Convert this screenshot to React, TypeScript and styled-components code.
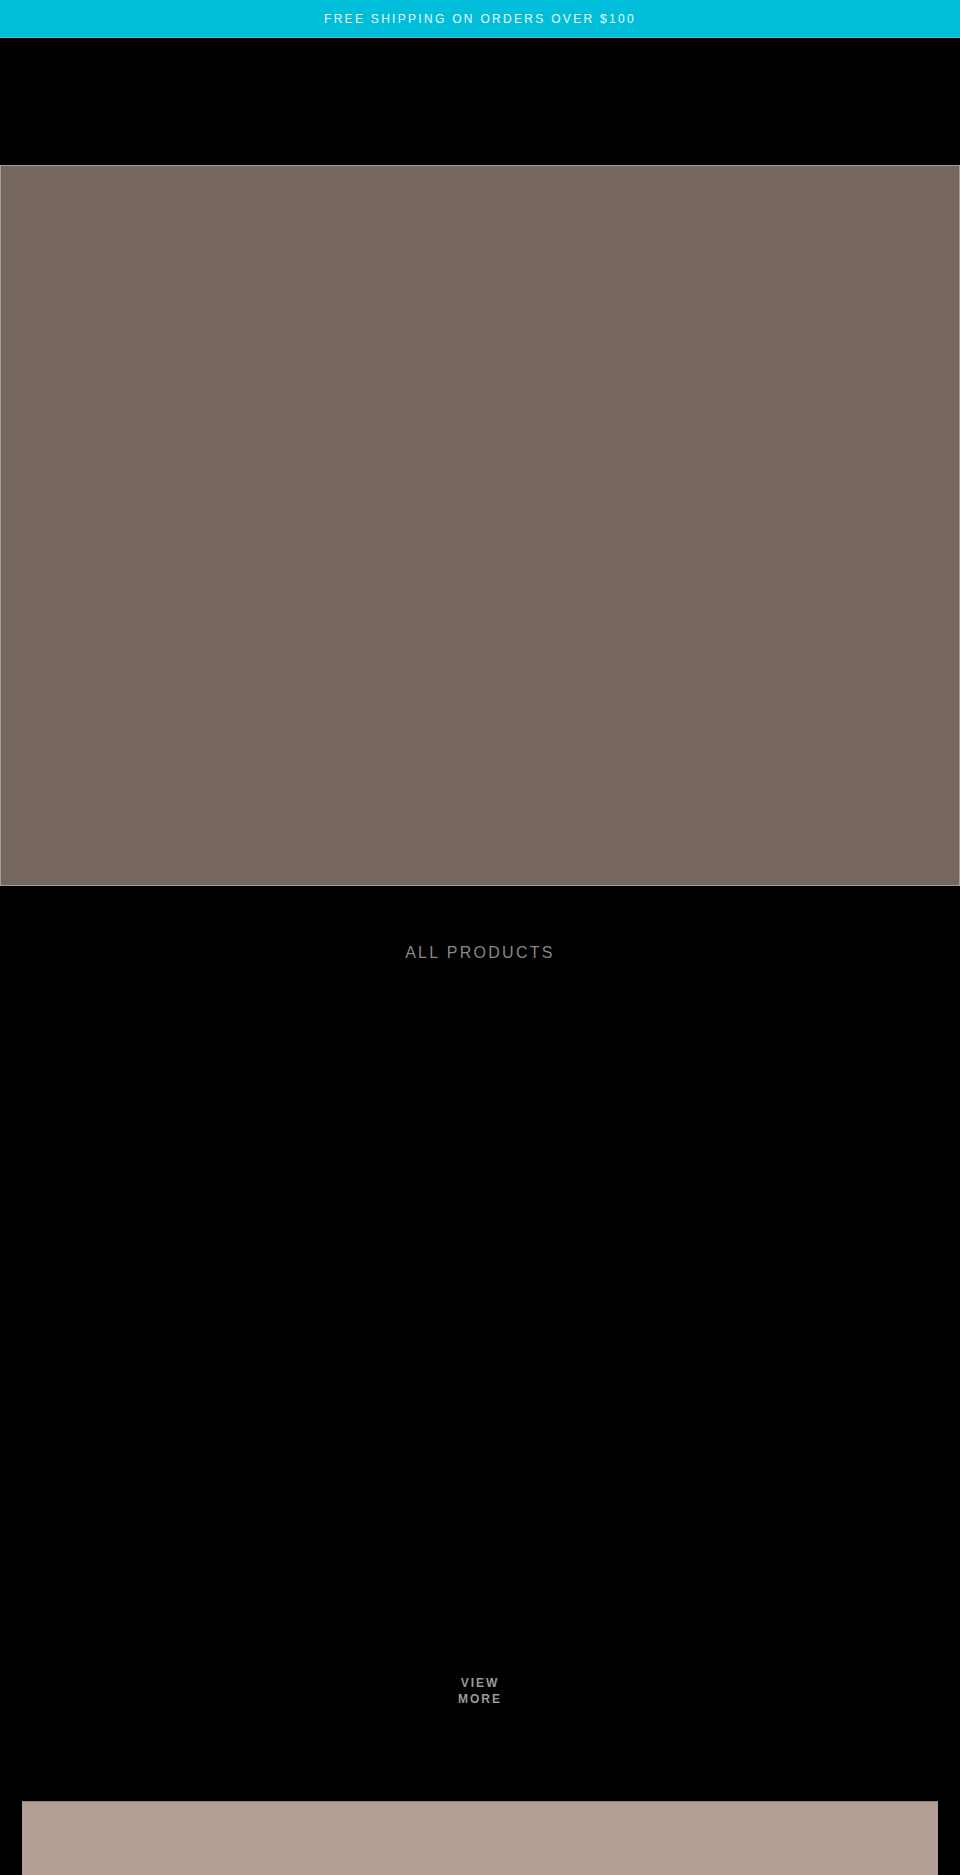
import React from "react";
import styled, { createGlobalStyle } from "styled-components";

const Global = createGlobalStyle`
  html, body { margin: 0; padding: 0; background: #000; }
  body { font-family: "Liberation Sans", Arial, Helvetica, sans-serif; }
  * { box-sizing: border-box; }
`;

const Page = styled.div`
  background: #000;
  display: flex;
  flex-direction: column;
`;

const Announcement = styled.div`
  height: 38px;
  background: #00bed9;
  border-bottom: 1px solid #3ec6da;
  display: flex;
  align-items: center;
  justify-content: center;
  color: #e8fbff;
  font-size: 12px;
  letter-spacing: 2.3px;
  line-height: 1;
  text-transform: uppercase;
`;

const Header = styled.header`
  height: 127px;
  background: #000;
`;

const Hero = styled.section`
  height: 721px;
  background: #75675e;
  border: 1px solid #a69d96;
`;

const Collection = styled.section`
  padding-top: 57px;
  display: flex;
  flex-direction: column;
  align-items: center;
`;

const Title = styled.h2`
  margin: 0;
  font-size: 16px;
  line-height: 20px;
  font-weight: 400;
  letter-spacing: 2.3px;
  color: #878787;
  text-transform: uppercase;
`;

const Grid = styled.div`
  width: 100%;
  height: 712px;
  display: grid;
  grid-template-columns: repeat(3, 1fr);
`;

const ViewMore = styled.a`
  display: block;
  width: 52px;
  text-align: center;
  font-size: 12px;
  line-height: 16px;
  font-weight: 700;
  letter-spacing: 2px;
  color: #9a9a9a;
  text-transform: uppercase;
  text-decoration: none;
`;

const Feature = styled.section`
  margin: 94px 22px 0;
  height: 74px;
  background: #b59e95;
  border-top: 1px solid #8f7f78;
`;

export default function App() {
  return (
    <>
      <Global />
      <Page>
        <Announcement>Free shipping on orders over $100</Announcement>
        <Header />
        <Hero />
        <Collection>
          <Title>All Products</Title>
          <Grid />
          <ViewMore href="#">View more</ViewMore>
        </Collection>
        <Feature />
      </Page>
    </>
  );
}
